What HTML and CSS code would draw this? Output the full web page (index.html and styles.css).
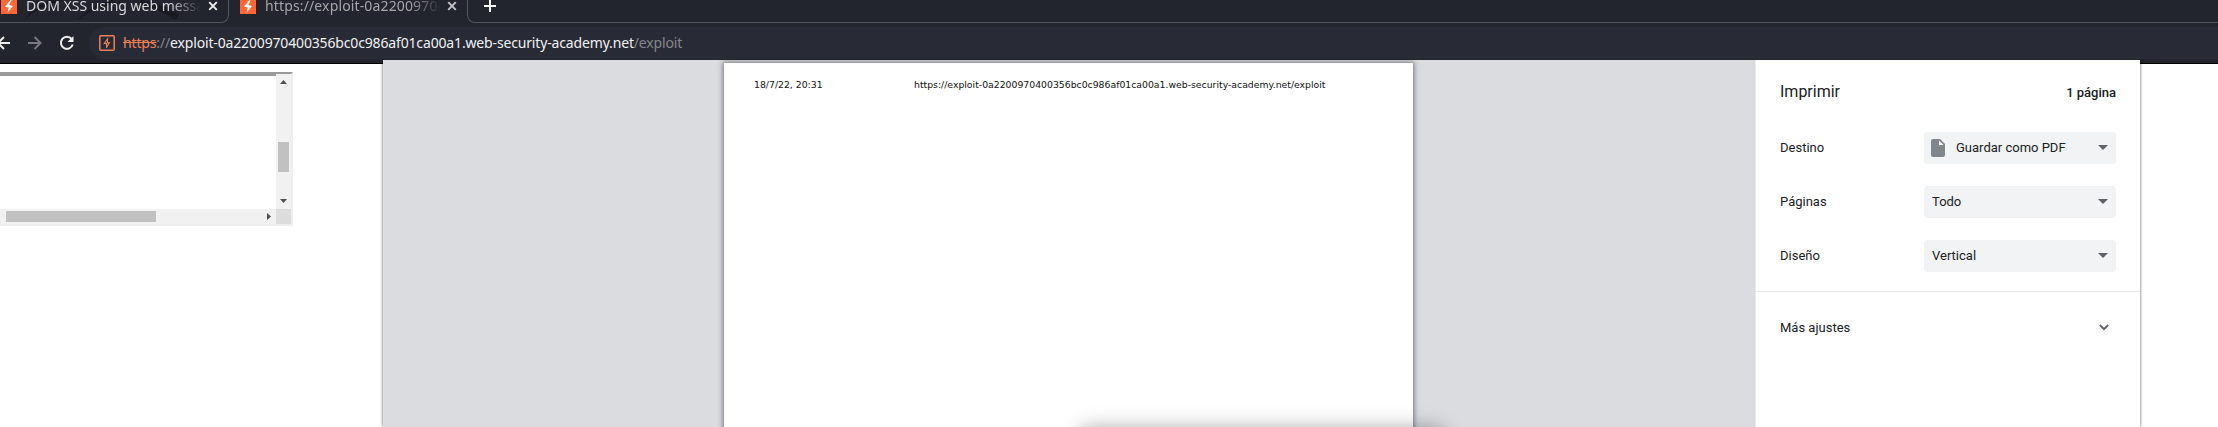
FILE: index.html
```html
<!DOCTYPE html>
<html lang="es">
<head>
<meta charset="utf-8">
<title>Imprimir</title>
<link rel="stylesheet" href="styles.css">
</head>
<body>
<svg width="0" height="0" class="defs"><defs>
<symbol id="bolt" viewBox="0 0 16 16"><rect width="16" height="16" fill="#ff6633"/><path d="M9.800 1.500 4 8.700l3.700.8L6.500 14.800 12 7.900l-3.700-.8L10.800 1.500z" fill="#fff"/></symbol>
<symbol id="close" viewBox="0 0 10 10"><path d="M1.200 1.200l7.600 7.600M8.800 1.200 1.200 8.800" stroke="currentColor" stroke-width="1.900"/></symbol>
</defs></svg>
<header class="browser">
  <div class="tabs">
    <div class="tab tab-first">
      <svg class="art" width="229" height="22" viewBox="0 0 229 22"><path d="M24 20Q35 9 62 0H50Q33 7 24 20zM78 20Q92 8 118 3L112 0Q88 6 78 20zM140 0Q166 4 179 15l-4 5Q158 8 140 6z" fill="#181a20"/></svg>
      <svg class="favicon"><use href="#bolt"/></svg>
      <span class="tab-title">DOM XSS using web messages</span>
      <svg class="close"><use href="#close"/></svg>
    </div>
    <div class="tab tab-second">
      <svg class="favicon"><use href="#bolt"/></svg>
      <span class="tab-title">https://exploit-0a2200970400</span>
      <svg class="close"><use href="#close"/></svg>
    </div>
    <div class="strip"><svg width="12" height="12" viewBox="0 0 12 12"><path d="M6 0v12M0 6h12" stroke="#fff" stroke-width="2"/></svg></div>
  </div>
  <div class="toolbar">
    <svg class="nav back" width="14" height="14" viewBox="0 0 14 14"><path d="M14 7H2M8 1 2 7l6 6" fill="none" stroke="#eee" stroke-width="2"/></svg>
    <svg class="nav forward" width="14" height="14" viewBox="0 0 14 14"><path d="M0 7h12M6.500 1l6 6-6 6" fill="none" stroke="#77797f" stroke-width="2"/></svg>
    <svg class="nav reload" width="16" height="16" viewBox="0 0 16 16"><path d="M12.600 4A6 6 0 1 0 13.700 9.500" fill="none" stroke="#eee" stroke-width="2"/><path d="M14.500 1v6h-6z" fill="#eee"/></svg>
    <div class="omnibox">
      <svg width="16" height="16" viewBox="0 0 16 16"><rect x=".8" y=".8" width="14.400" height="14.400" rx="1" fill="none" stroke="#ee8058" stroke-width="1.500"/><path d="M9 3 5.300 8.500l5-.8L7.300 13M8.500 4v4M7.500 8v4" fill="none" stroke="#ee8058" stroke-width="1.100"/></svg>
      <span class="url"><s>https</s><i>://</i>exploit-0a2200970400356bc0c986af01ca00a1.web-security-academy.net<i>/exploit</i></span>
    </div>
  </div>
</header>
<main class="page">
  <div class="frame">
    <div class="frame-body"></div>
    <div class="vscroll"><svg width="7" height="4" viewBox="0 0 7 4"><path d="M0 4 3.500 0 7 4z" fill="#505050"/></svg><b></b><svg width="7" height="4" viewBox="0 0 7 4"><path d="M0 0h7L3.500 4z" fill="#505050"/></svg></div>
    <div class="hscroll"><b></b><svg width="4" height="7" viewBox="0 0 4 7"><path d="M0 0v7l4-3.500z" fill="#505050"/></svg></div>
    <div class="corner"></div>
  </div>
</main>
<section class="dialog">
  <div class="preview">
    <div class="sheet"><span class="date">18/7/22, 20:31</span><span>https://exploit-0a2200970400356bc0c986af01ca00a1.web-security-academy.net/exploit</span></div>
    <div class="shade"></div>
  </div>
  <aside class="settings">
    <div class="heading"><h1>Imprimir</h1><strong>1 página</strong></div>
    <div class="row"><span>Destino</span><div class="select"><svg class="file" width="14" height="18" viewBox="0 0 14 18"><path d="M2 0h7l5 5v11q0 2-2 2H2q-2 0-2-2V2Q0 0 2 0z" fill="#80868b"/><path d="M8 1.500V6h4.500z" fill="#fff"/></svg>Guardar como PDF<em></em></div></div>
    <div class="row"><span>Páginas</span><div class="select">Todo<em></em></div></div>
    <div class="row"><span>Diseño</span><div class="select">Vertical<em></em></div></div>
    <div class="more"><span>Más ajustes</span><svg width="10" height="7" viewBox="0 0 10 7"><path d="M.8 1 5 5.200 9.200 1" fill="none" stroke="#5f6368" stroke-width="1.800"/></svg></div>
  </aside>
</section>
</body>
</html>
```
FILE: styles.css
```css
* { box-sizing: border-box; }
body { margin: 0; width: 2218px; height: 427px; overflow: hidden; position: relative; background: #fff; }
svg { display: block; flex: none; }
.defs { position: absolute; }
.browser { height: 64px; background: #23252e; border-bottom: 1px solid #000; font-family: "Noto Sans", sans-serif; }
.tabs { display: flex; height: 27px; }
.tab { position: relative; display: flex; height: 23px; color: #d8d9dc; }
.tab-first { width: 229px; padding-left: 1px; border: solid #53555d; border-width: 0 1px 1px 0; border-radius: 0 0 8px 0; }
.tab-second { width: 238px; padding-left: 11px; color: #a5a6aa; }
.art { position: absolute; left: 0; top: 0; }
.favicon { position: relative; width: 16px; height: 16px; margin-top: -2px; }
.tab-title { position: relative; width: 175px; margin: -6px 0 0 9px; font-size: 14px; line-height: 24px; height: 24px; white-space: nowrap; overflow: hidden; -webkit-mask-image: linear-gradient(90deg, #000 82%, transparent); mask-image: linear-gradient(90deg, #000 82%, transparent); }
.tab-second .tab-title { width: 176px; letter-spacing: .14px; }
.close { width: 10px; height: 10px; margin: 1px 0 0 7px; color: #eee; }
.tab-second .close { margin-left: 6px; color: #c1c2c5; }
.strip { flex: 1; height: 23px; border: solid #53555d; border-width: 0 0 1px 1px; border-radius: 0 0 0 8px; padding-left: 16px; }
.toolbar { display: flex; height: 32px; }
.nav { margin-top: 9px; }
.back { margin-left: -4px; }
.forward { margin-left: 18px; }
.reload { margin: 8px 0 0 17px; }
.omnibox { flex: 1; display: flex; margin-left: 14px; padding: 8px 0 0 10px; background: #282a36; border-radius: 16px 0 0 16px; }
.url { margin: -4px 0 0 8px; font-size: 14px; line-height: 24px; letter-spacing: -.155px; color: #f1f1f2; white-space: nowrap; }
.url s { color: #ee8058; }
.url i { color: #85878d; font-style: normal; }
.page { padding-top: 8px; }
.frame { display: grid; grid-template: 135px 15px / 276px 15px; width: 293px; border: solid #eee; border-width: 2px 2px 2px 0; border-top-color: #9a9a9a; }
.frame-body { border-top: 2px solid #9a9a9a; }
.vscroll { background: #f1f1f1; display: flex; flex-direction: column; align-items: center; padding: 6px 0; }
.vscroll b { width: 11px; height: 30px; margin: 58px 0 27px; background: #c1c1c1; }
.hscroll { background: #f1f1f1; display: flex; align-items: center; padding: 0 5px 0 6px; justify-content: space-between; }
.hscroll b { width: 150px; height: 11px; background: #c1c1c1; }
.corner { background: #dcdcdc; }
.dialog { position: absolute; left: 383px; top: 60px; width: 1757px; height: 367px; display: flex; box-shadow: 0 0 3px rgba(0,0,0,.65); font-family: Roboto, sans-serif; color: #202124; clip-path: inset(0 -6px 0 -6px); }
.preview { position: relative; width: 1373px; background: #dadce0; border-right: 1px solid #e8eaed; padding: 3px 0 0 341px; overflow: hidden; }
.sheet { width: 689px; height: 420px; padding: 13px 0 0 30px; background: #fff; box-shadow: 0 0 5px 1px rgba(60,55,65,.65); display: flex; font: 9.300px/18px "DejaVu Sans", sans-serif; color: #111; white-space: nowrap; }
.date { width: 160px; }
.shade { position: absolute; left: 699px; top: 371px; width: 360px; height: 30px; border-radius: 8px; box-shadow: 0 0 20px 3px rgba(0,0,0,.35); }
.settings { width: 384px; background: #fff; font-size: 13px; }
.heading { display: flex; justify-content: space-between; align-items: center; height: 64px; padding: 0 24px; }
h1 { margin: 0; font-size: 16px; line-height: 20px; font-weight: 400; }
.heading strong { font-weight: 500; }
.row { display: flex; align-items: center; justify-content: space-between; height: 54px; padding: 0 24px; }
.row span { padding-bottom: 2px; }
.heading + .row { margin-top: -3px; }
.select { display: flex; align-items: center; width: 192px; height: 32px; padding: 0 8px 2px; background: #f1f3f4; border-radius: 4px; }
.file { margin: 2px 11px 0 -1px; }
.select em { margin-left: auto; border: 5px solid transparent; border-top-color: #5f6368; border-bottom: 0; }
.more { display: flex; justify-content: space-between; align-items: center; height: 72px; margin-top: 8px; padding: 0 31px 1px 24px; border-top: 1px solid #e8eaed; }
```
